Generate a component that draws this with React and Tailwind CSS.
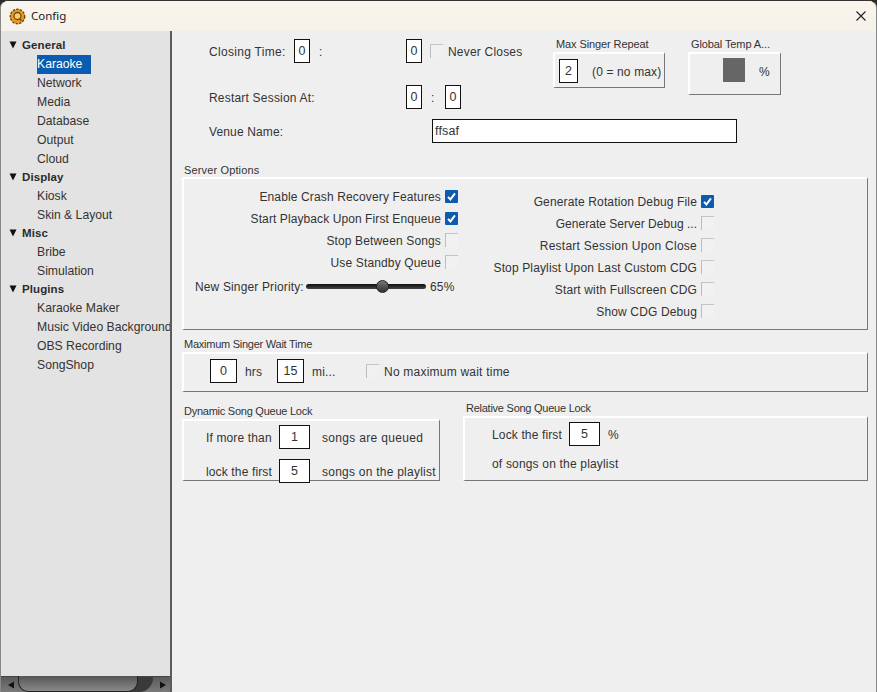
import React from "react";

const font = "font-['Liberation_Sans',Arial,sans-serif]";

function Field({ w, h = "h-[24px]", align = "text-center", children }) {
  return (
    <div className={`${w} ${h} ${align} shrink-0 border border-[#111] bg-white text-[12.5px] leading-[23px] text-[#333]`}>
      {children}
    </div>
  );
}

function Check({ on }) {
  if (on) {
    return (
      <div className="flex h-[13px] w-[13px] shrink-0 items-center justify-center rounded-[1px] bg-[#0b5cb0]">
        <svg width="11" height="11" viewBox="0 0 12 12">
          <path d="M2.2 6.4 4.8 9.2 9.8 2.6" fill="none" stroke="#fff" strokeWidth="2.1" />
        </svg>
      </div>
    );
  }
  return <div className="h-[14px] w-[13px] shrink-0 border-t border-l border-t-[#c4c4c4] border-l-[#bdbdbd] bg-[#f1f1f1]" />;
}

function Box({ className = "", children }) {
  return (
    <div className={`border-t-2 border-r border-b border-l-2 border-t-white border-r-[#777] border-b-[#777] border-l-white ${className}`}>
      {children}
    </div>
  );
}

function GroupLabel({ className = "", children }) {
  return <div className={`text-[11px] leading-[15px] whitespace-nowrap text-[#333] ${className}`}>{children}</div>;
}

function Label({ className = "", children }) {
  return <span className={`shrink-0 pt-[2px] whitespace-nowrap ${className}`}>{children}</span>;
}

function CheckRow({ label, on, track = "" }) {
  return (
    <div className="flex h-[22px] items-center justify-end gap-[4px]">
      <Label className={track}>{label}</Label>
      <Check on={on} />
    </div>
  );
}

const tree = [
  ["General", ["Karaoke", "Network", "Media", "Database", "Output", "Cloud"]],
  ["Display", ["Kiosk", "Skin & Layout"]],
  ["Misc", ["Bribe", "Simulation"]],
  ["Plugins", ["Karaoke Maker", "Music Video Background", "OBS Recording", "SongShop"]],
];

function Sidebar() {
  return (
    <aside className="flex w-[171px] shrink-0 flex-col overflow-hidden border-r-2 border-r-[#5c5c5c] bg-[#e3e3e3]">
      <div className="flex-1 pt-[6px] text-[#333]">
        {tree.map(([cat, items]) => (
          <div key={cat}>
            <div className="flex h-[18px] items-center pl-[8px] text-[11.5px] font-bold tracking-[0.1px] text-[#2b2b2b]">
              <svg width="9" height="8" viewBox="0 0 9 8" className="mr-[4px] -mt-[3px] shrink-0">
                <path d="M0.5 0.5H7.5L4 7.5Z" fill="#111" />
              </svg>
              {cat}
            </div>
            {items.map((it) => (
              <div key={it} className="flex h-[19px] items-center pl-[36px] text-[12.2px] tracking-normal whitespace-nowrap">
                <span className={it === "Karaoke" ? "flex h-[19px] w-[54px] items-center bg-[#0b5cb0] text-white" : ""}>{it}</span>
              </div>
            ))}
          </div>
        ))}
      </div>
      <div className="relative flex h-[16px] shrink-0 items-center justify-between border-t border-t-[#444] bg-gradient-to-b from-[#5a5a5a] to-[#7a7a7a] pr-[3px] pl-[6px]">
        <svg width="8" height="8" viewBox="0 0 8 8"><path d="M1 4 7 0.5V7.5Z" fill="#111" /></svg>
        <svg width="8" height="8" viewBox="0 0 8 8"><path d="M7 4 1 0.5V7.5Z" fill="#111" /></svg>
        <div className="absolute top-0 left-[17px] h-[15px] w-[135px] rounded-b-[14px] bg-[#3a3a3a]" />
        <div className="absolute -top-px left-[17px] h-[16px] w-[120px] rounded-b-[10px] border border-t-0 border-[#222] bg-gradient-to-b from-[#555] to-[#8a8a8a]" />
      </div>
    </aside>
  );
}

function TopSection() {
  return (
    <div className="flex h-[132px]">
      <div className="w-[371px] shrink-0 pt-[8px] pl-[27px]">
        <div className="flex h-[24px] items-center">
          <Label className="w-[85px] tracking-[0.3px]">Closing Time:</Label>
          <Field w="w-[16px]">0</Field>
          <Label className="ml-[9px] w-[87px]">:</Label>
          <Field w="w-[16px]">0</Field>
          <div className="ml-[8px]"><Check /></div>
          <Label className="ml-[5px] tracking-[0.2px]">Never Closes</Label>
        </div>
        <div className="mt-[22px] flex h-[24px] items-center">
          <Label className="w-[197px] tracking-[0.2px]">Restart Session At:</Label>
          <Field w="w-[16px]">0</Field>
          <Label className="w-[23px] pl-[9px]">:</Label>
          <Field w="w-[16px]">0</Field>
        </div>
        <div className="mt-[10px] flex h-[24px] items-center">
          <Label className="w-[223px]">Venue Name:</Label>
          <Field w="w-[305px]" align="pl-[2px] text-left">ffsaf</Field>
        </div>
      </div>
      <div className="flex pt-[6px]">
        <div className="w-[112px]">
          <GroupLabel className="pl-[3px] tracking-[-0.1px]">Max Singer Repeat</GroupLabel>
          <Box className="flex h-[36px] items-center pl-[4px]">
            <Field w="w-[19px]">2</Field>
            <Label className="ml-[14px]">(0 = no max)</Label>
          </Box>
        </div>
        <div className="ml-[23px] w-[93px]">
          <GroupLabel className="pl-[3px] tracking-[-0.1px]">Global Temp A...</GroupLabel>
          <Box className="flex h-[43px] items-start pt-[4px] pl-[33px]">
            <div className="h-[24px] w-[22px] shrink-0 bg-[#666]" />
            <span className="mt-[5px] ml-[14px]">%</span>
          </Box>
        </div>
      </div>
    </div>
  );
}

function ServerOptions() {
  return (
    <div>
      <GroupLabel className="h-[14px] pl-[2px]">Server Options</GroupLabel>
      <Box className="flex h-[153px]">
        <div className="w-[274px] shrink-0 pt-[6px]">
          <CheckRow label="Enable Crash Recovery Features" on />
          <CheckRow label="Start Playback Upon First Enqueue" on track="tracking-[0.09px]" />
          <CheckRow label="Stop Between Songs" />
          <CheckRow label="Use Standby Queue" />
          <div className="mt-[2px] flex h-[22px] items-center pl-[11px]">
            <Label className="w-[111px]">New Singer Priority:</Label>
            <div className="relative h-[5px] w-[120px] shrink-0 rounded-full bg-gradient-to-b from-[#111] to-[#444]">
              <div className="absolute -top-[4px] left-[70px] h-[13px] w-[13px] rounded-full border border-[#222] bg-gradient-to-b from-[#777] to-[#333]" />
            </div>
            <Label className="ml-[4px]">65%</Label>
          </div>
        </div>
        <div className="w-[256px] shrink-0 pt-[11px]">
          <CheckRow label="Generate Rotation Debug File" on />
          <CheckRow label="Generate Server Debug ..." track="tracking-[0.02px]" />
          <CheckRow label="Restart Session Upon Close" track="tracking-[0.25px]" />
          <CheckRow label="Stop Playlist Upon Last Custom CDG" />
          <CheckRow label="Start with Fullscreen CDG" />
          <CheckRow label="Show CDG Debug" />
        </div>
      </Box>
    </div>
  );
}

function WaitTime() {
  return (
    <div className="mt-[7px]">
      <GroupLabel className="pl-[2px] tracking-[-0.25px]">Maximum Singer Wait Time</GroupLabel>
      <Box className="h-[40px] pt-[5px] pl-[26px]">
        <div className="flex h-[24px] items-center">
          <Field w="w-[27px]">0</Field>
          <Label className="ml-[8px] w-[32px]">hrs</Label>
          <Field w="w-[27px]">15</Field>
          <Label className="ml-[8px] w-[54px]">mi...</Label>
          <Check />
          <Label className="ml-[5px] tracking-[0.22px]">No maximum wait time</Label>
        </div>
      </Box>
    </div>
  );
}

function Locks() {
  return (
    <div className="flex items-start">
      <div className="mt-[12px] w-[258px] shrink-0">
        <GroupLabel className="pl-[2px] tracking-[-0.25px]">Dynamic Song Queue Lock</GroupLabel>
        <Box className="h-[62px] pt-[4px] pl-[22px]">
          <div className="flex h-[24px] items-center">
            <Label className="w-[73px]">If more than</Label>
            <Field w="w-[31px]">1</Field>
            <Label className="ml-[12px] tracking-[0.32px]">songs are queued</Label>
          </div>
          <div className="mt-[10px] flex h-[24px] items-center">
            <Label className="w-[73px]">lock the first</Label>
            <Field w="w-[31px]">5</Field>
            <Label className="ml-[12px] tracking-[0.24px]">songs on the playlist</Label>
          </div>
        </Box>
      </div>
      <div className="mt-[9px] ml-[23px] flex-1">
        <GroupLabel className="pl-[3px] tracking-[-0.25px]">Relative Song Queue Lock</GroupLabel>
        <Box className="h-[65px] pt-[4px] pl-[27px]">
          <div className="flex h-[24px] items-center">
            <Label className="w-[77px]">Lock the first</Label>
            <Field w="w-[31px]">5</Field>
            <Label className="ml-[8px]">%</Label>
          </div>
          <div className="mt-[5px] flex h-[24px] items-center">
            <Label className="tracking-[0.18px]">of songs on the playlist</Label>
          </div>
        </Box>
      </div>
    </div>
  );
}

export default function App() {
  return (
    <div className={`${font} h-[692px] w-[877px] overflow-hidden bg-[#2a2a2a]`}>
      <div className="flex h-full flex-col overflow-hidden rounded-t-[8px] border-t border-r border-l border-t-[#333] border-r-[#888] border-l-[#888] bg-[#efefef]">
        <header className="flex h-[30px] shrink-0 items-center bg-gradient-to-b from-[#faf5eb] to-[#f5f2ec] pl-[8px]">
          <svg width="17" height="17" viewBox="0 0 17 17" className="shrink-0">
            <circle cx="8.5" cy="8.5" r="7.2" fill="#eb9a1c" stroke="#6b4210" strokeWidth="1.4" strokeDasharray="2.4 1.2" />
            <circle cx="8.5" cy="8" r="3.5" fill="#f6cf72" stroke="#7a4a10" strokeWidth="1.3" />
            <path d="M10.3 10.2 12.4 12.8" stroke="#7a4a10" strokeWidth="1.4" />
          </svg>
          <span className="ml-[5px] font-['Noto_Sans',sans-serif] text-[11.5px] text-[#222]">Config</span>
          <svg width="10" height="10" viewBox="0 0 10 10" className="mr-[10px] ml-auto shrink-0">
            <path d="M0.5 0.5 9.5 9.5M9.5 0.5 0.5 9.5" stroke="#222" strokeWidth="1.1" />
          </svg>
        </header>
        <div className="flex min-h-0 flex-1 text-[12px] tracking-[0.14px] text-[#333]">
          <Sidebar />
          <main className="min-w-0 flex-1 pr-[8px] pl-[10px]">
            <TopSection />
            <ServerOptions />
            <WaitTime />
            <Locks />
          </main>
        </div>
      </div>
    </div>
  );
}
